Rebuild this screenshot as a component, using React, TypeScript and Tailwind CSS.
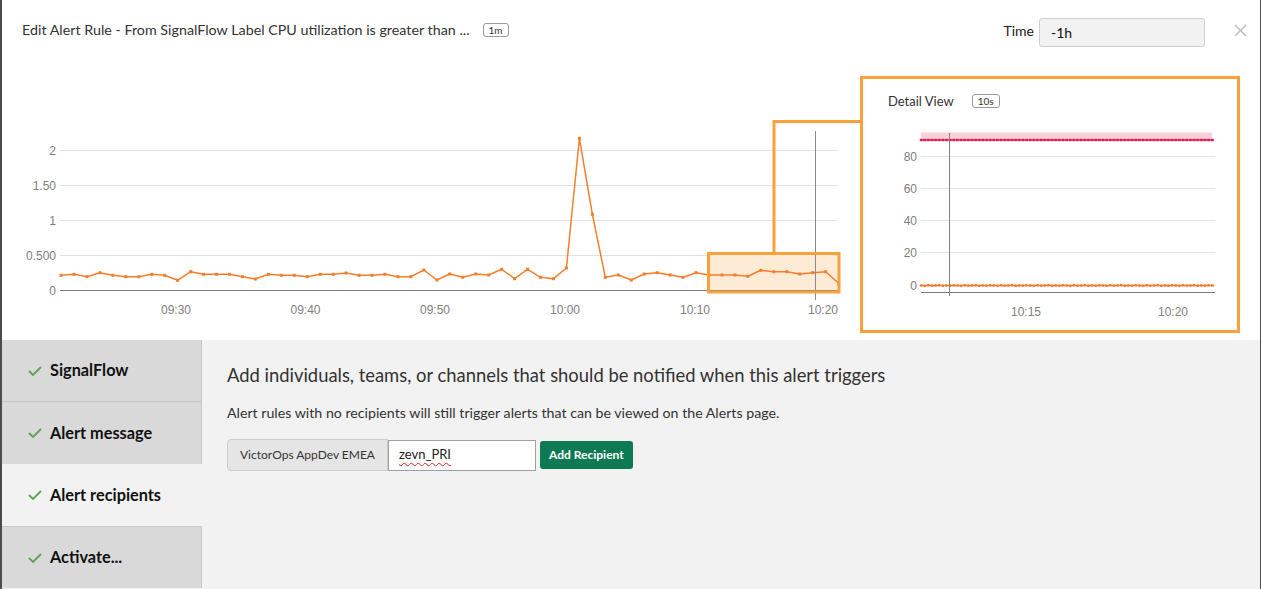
const mainY = [
  275.3, 274.3, 276.7, 272.7, 275.3, 276.7, 276.7, 274.3, 275.3, 280.3, 271.7, 274.3, 274.3, 274.3,
  276.7, 279, 274.3, 275.3, 275.3, 276.7, 274.3, 274.3, 273, 275.3, 275.3, 274.3, 276.7, 276.7,
  270, 280, 274, 277.3, 274, 275, 269.3, 278.7, 269.3, 277.3, 278.7, 268, 138.3, 214.3, 277.3, 275,
  280, 274, 272.7, 275, 277.3, 272.7, 275, 275, 275, 276.3, 270.3, 271.7, 271.7, 274, 272.7, 271.7,
  283.3,
];
const mainPts = mainY.map((y, i) => [61 + i * 12.96, y]);

const detailXs = Array.from({ length: 81 }, (_, i) => 921 + i * 3.64);
const orangeJitter = [0, 0.4, -0.3, 0.2, 0, -0.4, 0.3, 0, 0.2, -0.2];

const tabs = [
  { label: "SignalFlow", active: false },
  { label: "Alert message", active: false },
  { label: "Alert recipients", active: true },
  { label: "Activate...", active: false },
];

function MainChart() {
  const grid = [
    { y: 150.5, label: "2" },
    { y: 185.5, label: "1.50" },
    { y: 220.5, label: "1" },
    { y: 255.5, label: "0.500" },
  ];
  const ticks = [
    { x: 176, t: "09:30" },
    { x: 305.5, t: "09:40" },
    { x: 435, t: "09:50" },
    { x: 565, t: "10:00" },
    { x: 695, t: "10:10" },
    { x: 823, t: "10:20" },
  ];
  return (
    <svg width={858} height={264} viewBox="2 76 858 264" className="shrink-0" style={{ fontFamily: "'Liberation Sans', Arial, sans-serif" }}>
      {grid.map((g) => (
        <g key={g.label}>
          <line x1={60} x2={838} y1={g.y} y2={g.y} stroke="#e2e2e2" strokeWidth={1} />
          <text x={56} y={g.y + 4} textAnchor="end" fontSize={12} fill="#808080">
            {g.label}
          </text>
        </g>
      ))}
      <text x={56} y={294.5} textAnchor="end" fontSize={12} fill="#808080">0</text>
      <rect x={708.5} y={253.5} width={130.5} height={38.5} fill="#feebd6" />
      <line x1={60} x2={838} y1={290.5} y2={290.5} stroke="#7a7a7a" strokeWidth={1} />
      {ticks.map((t) => (
        <text key={t.t} x={t.x} y={314} textAnchor="middle" fontSize={12} fill="#808080">
          {t.t}
        </text>
      ))}
      <polyline
        points={mainPts.map((p) => p.join(",")).join(" ")}
        fill="none"
        stroke="#f57e2c"
        strokeWidth={1.5}
        strokeLinejoin="round"
      />
      {mainPts.map(([x, y], i) => (
        <rect key={i} x={x - 1.5} y={y - 1.5} width={3} height={3} fill="#f57e2c" />
      ))}
      <line x1={815.5} x2={815.5} y1={131} y2={300} stroke="#8a8a8a" strokeWidth={1} />
      <rect x={708.5} y={253.5} width={130.5} height={38.5} fill="none" stroke="#f9a23b" strokeWidth={3} />
      <polyline points="774,252 774,121.5 860,121.5" fill="none" stroke="#f9a23b" strokeWidth={3} />
    </svg>
  );
}

function DetailChart() {
  const grid = [
    { y: 156.5, label: "80" },
    { y: 188.5, label: "60" },
    { y: 220.5, label: "40" },
    { y: 252.5, label: "20" },
  ];
  return (
    <svg width={374} height={211} viewBox="863 119 374 211" style={{ fontFamily: "'Liberation Sans', Arial, sans-serif" }}>
      <rect x={921} y={132.5} width={291} height={7} fill="#f8d2da" />
      {grid.map((g) => (
        <g key={g.label}>
          <line x1={921} x2={1215} y1={g.y} y2={g.y} stroke="#e2e2e2" strokeWidth={1} />
          <text x={917} y={g.y + 4} textAnchor="end" fontSize={12} fill="#808080">
            {g.label}
          </text>
        </g>
      ))}
      <text x={917} y={290} textAnchor="end" fontSize={12} fill="#808080">0</text>
      <line x1={921} x2={1215} y1={292.5} y2={292.5} stroke="#7a7a7a" strokeWidth={1} />
      <line x1={921} x2={1214} y1={140} y2={140} stroke="#e8174d" strokeWidth={1.5} />
      {detailXs.map((x, i) => (
        <rect key={"r" + i} x={x - 1.2} y={138.8} width={2.4} height={2.4} fill="#e8174d" />
      ))}
      <line x1={921} x2={1214} y1={285.5} y2={285.5} stroke="#f57e2c" strokeWidth={1.5} />
      {detailXs.map((x, i) => (
        <rect key={"o" + i} x={x - 1.2} y={284.3 + orangeJitter[i % 10]} width={2.4} height={2.4} fill="#f57e2c" />
      ))}
      <line x1={949.5} x2={949.5} y1={133} y2={296} stroke="#808080" strokeWidth={1} />
      <text x={1026} y={316} textAnchor="middle" fontSize={12} fill="#808080">10:15</text>
      <text x={1173} y={316} textAnchor="middle" fontSize={12} fill="#808080">10:20</text>
    </svg>
  );
}

function Badge({ children }: { children: string }) {
  return (
    <span className="flex h-[14px] items-center rounded-[3px] border border-[#9a9a9a] px-[5px] text-[10px] leading-none text-[#333]">
      {children}
    </span>
  );
}

function CheckMark() {
  return (
    <svg width={14} height={10} viewBox="0 0 14 10" className="shrink-0">
      <polyline points="1,5 5,9 13,1" fill="none" stroke="#5ba450" strokeWidth={1.8} />
    </svg>
  );
}

export default function App() {
  return (
    <div
      className="flex h-[589px] w-[1261px] flex-col overflow-hidden border-l-2 border-r border-[#4b4b4b] bg-white text-[#333]"
      style={{ fontFamily: "Lato, 'Liberation Sans', sans-serif" }}
    >
      {/* header */}
      <div className="flex h-[76px] shrink-0 items-start">
        <div className="mt-[21px] flex h-[18px] items-center gap-[13px] pl-[20px]">
          <span className="text-[14.3px] leading-[18px] text-[#333]">
            Edit Alert Rule - From SignalFlow Label CPU utilization is greater than ...
          </span>
          <Badge>1m</Badge>
        </div>
        <div className="ml-auto mr-[13px] flex items-start">
          <span className="mt-[23px] text-[14px] leading-[16px] text-[#222]">Time</span>
          <div className="ml-[5px] mt-[18px] flex h-[29px] w-[166px] items-center rounded-[3px] border border-[#cfcfcf] bg-[#f2f2f2] pl-[11px] text-[14px] text-[#111]">
            -1h
          </div>
          <svg width={13} height={13} viewBox="0 0 13 13" className="ml-[29px] mt-[24px]">
            <path d="M1 1 12 12M12 1 1 12" stroke="#b9b9b9" strokeWidth={1.4} />
          </svg>
        </div>
      </div>

      {/* charts */}
      <div className="flex h-[264px] shrink-0 items-start">
        <MainChart />
        <div className="flex h-[257px] w-[380px] shrink-0 flex-col border-[3px] border-[#f9a23b] bg-white">
          <div className="flex h-[40px] shrink-0 items-start pl-[25px] pt-[14px]">
            <div className="flex h-[16px] items-center gap-[18px]">
              <span className="text-[13px] leading-[16px] text-[#333]">Detail View</span>
              <Badge>10s</Badge>
            </div>
          </div>
          <DetailChart />
        </div>
      </div>

      {/* bottom */}
      <div className="flex min-h-0 flex-1 bg-[#f2f2f2]">
        <div className="flex w-[200px] shrink-0 flex-col">
          {tabs.map((t, i) => (
            <div
              key={t.label}
              className={
                t.active
                  ? "flex h-[62px] items-center gap-[8px] bg-[#f2f2f2] pl-[26px]"
                  : i === 0
                    ? "flex h-[62px] items-center gap-[8px] border-r border-b border-[#c7c7c7] bg-[#d9d9d9] pl-[26px]"
                    : i === 3
                      ? "flex h-[62px] items-center gap-[8px] border-t border-r border-[#c7c7c7] bg-[#d9d9d9] pl-[26px]"
                      : "flex h-[62px] items-center gap-[8px] border-r border-[#c7c7c7] bg-[#d9d9d9] pl-[26px]"
              }
            >
              <CheckMark />
              <span className="text-[16.3px] font-bold text-[#111]">{t.label}</span>
            </div>
          ))}
        </div>
        <div className="flex flex-col pl-[25px] pt-[23px]">
          <h2 className="text-[18.4px] leading-[24px] text-[#333]">
            Add individuals, teams, or channels that should be notified when this alert triggers
          </h2>
          <p className="mt-[17px] text-[14.2px] leading-[18px] text-[#333]">
            Alert rules with no recipients will still trigger alerts that can be viewed on the Alerts page.
          </p>
          <div className="mt-[17px] flex items-center">
            <div className="flex h-[32px] items-center rounded-l-[4px] border border-[#cccccc] bg-[#e5e5e5] px-[12px] text-[12px] text-[#333]">
              VictorOps AppDev EMEA
            </div>
            <div className="flex h-[31px] w-[148px] items-center border border-[#9f9f9f] bg-white pl-[10px] text-[13px] text-[#222]">
              <span className="underline decoration-[#e02020] decoration-wavy decoration-1 underline-offset-[3px]">zevn_PRI</span>
            </div>
            <button className="ml-[4px] h-[28px] rounded-[3px] bg-[#0d7a53] px-[9px] text-[12px] font-bold text-white">
              Add Recipient
            </button>
          </div>
        </div>
      </div>
    </div>
  );
}
